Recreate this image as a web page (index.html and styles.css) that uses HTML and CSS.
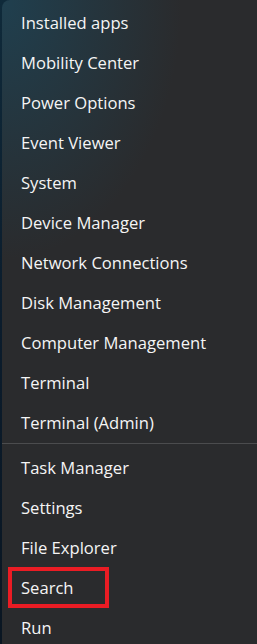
FILE: index.html
```html
<!DOCTYPE html>
<html lang="en">
<head>
  <meta charset="UTF-8" />
  <title>Quick Link Menu</title>
  <link rel="stylesheet" href="styles.css">
</head>
<body>
  <div class="desktop">
    <div class="menu">
      <div class="item">Installed apps</div>
      <div class="item">Mobility Center</div>
      <div class="item">Power Options</div>
      <div class="item">Event Viewer</div>
      <div class="item">System</div>
      <div class="item">Device Manager</div>
      <div class="item">Network Connections</div>
      <div class="item">Disk Management</div>
      <div class="item">Computer Management</div>
      <div class="item">Terminal</div>
      <div class="item">Terminal (Admin)</div>
      <div class="separator"></div>
      <div class="item">Task Manager</div>
      <div class="item">Settings</div>
      <div class="item">File Explorer</div>
      <div class="item highlighted">Search</div>
      <div class="item">Run</div>
    </div>
  </div>
</body>
</html>
```

FILE: styles.css
```css
body {
  margin: 0;
  font-family: 'Open Sans', 'Noto Sans', sans-serif;
  background: #0c1a2a;
}

.desktop {
  width: 257px;
  height: 644px;
  overflow: hidden;
  background: linear-gradient(180deg, #0f2a3a 0%, #0b1c2c 50%, #0a1622 100%);
}

.menu {
  margin-left: 2px;
  width: 262px;
  height: 644px;
  padding-top: 2px;
  box-sizing: border-box;
  border-radius: 8px 8px 0 0;
  background:
    radial-gradient(ellipse 180px 260px at 0 0, rgba(28, 70, 90, 0.75), rgba(28, 70, 90, 0) 100%),
    #2a2b2d;
  color: #f5f5f5;
}

.item {
  height: 40px;
  display: flex;
  align-items: center;
  padding-left: 19px;
  padding-top: 1px;
  font-size: 16.6px;
  font-weight: 500;
  box-sizing: border-box;
}

.separator {
  height: 1px;
  margin: 1px 0 3px;
  background: #4b4c4e;
}

/* red annotation box drawn over the Search row */
.highlighted {
  position: relative;
}

.highlighted::after {
  content: "";
  position: absolute;
  left: 6px;
  top: 0;
  width: 101px;
  height: 41px;
  border: 4px solid #ea1c24;
  box-sizing: border-box;
}
```
